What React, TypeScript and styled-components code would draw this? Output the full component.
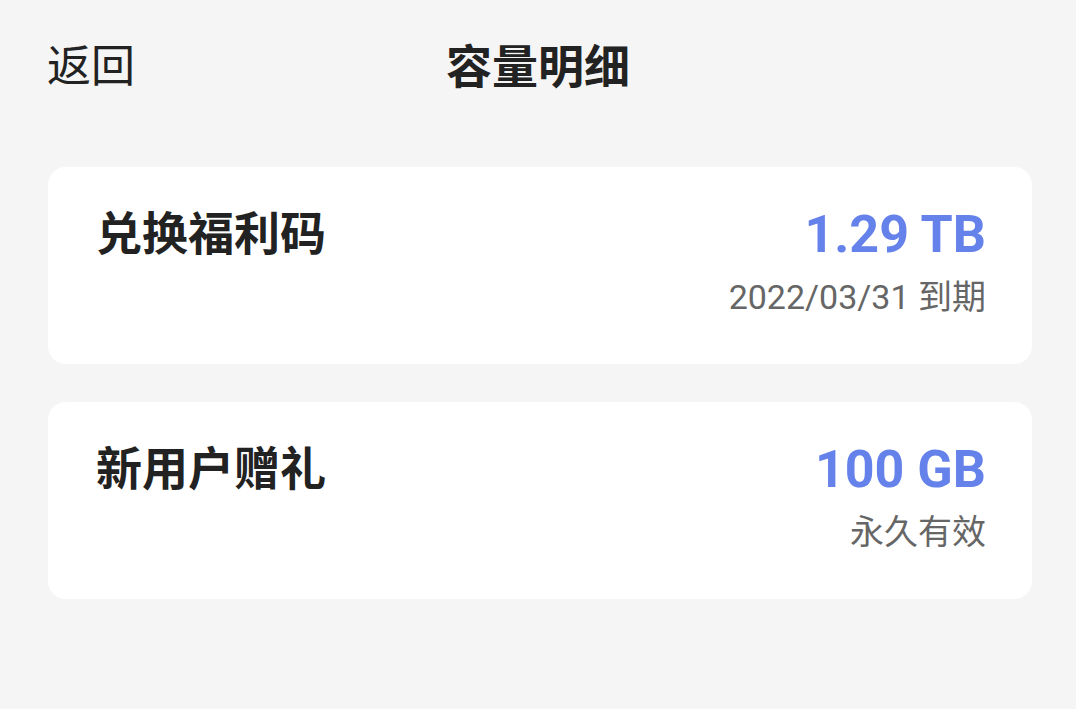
import React from "react";
import styled, { createGlobalStyle } from "styled-components";

const GlobalStyle = createGlobalStyle`
  html, body {
    margin: 0;
    padding: 0;
    background: #f5f5f5;
  }
  body {
    font-family: Roboto, "Noto Sans CJK SC", sans-serif;
    -webkit-font-smoothing: antialiased;
  }
`;

const Page = styled.div`
  width: 1076px;
  min-height: 709px;
  background: #f5f5f5;
  display: flex;
  flex-direction: column;
`;

const Header = styled.header`
  position: relative;
  height: 54px;
  margin-top: 36px;
  padding: 0 47px;
  display: flex;
  align-items: center;
`;

const Back = styled.span`
  font-family: "Noto Sans CJK SC", sans-serif;
  font-size: 44px;
  line-height: 54px;
  color: #222;
`;

const Title = styled.h1`
  position: absolute;
  left: 0;
  right: 0;
  top: 0;
  margin: 0;
  text-align: center;
  font-family: "Noto Sans CJK SC", sans-serif;
  font-size: 46px;
  font-weight: 700;
  line-height: 54px;
  color: #222;
  pointer-events: none;
`;

const List = styled.div`
  display: flex;
  flex-direction: column;
  gap: 38px;
  margin: 77px 44px 0 48px;
`;

const Card = styled.div`
  background: #fff;
  border-radius: 18px;
  height: 197px;
  box-sizing: border-box;
  padding: 42px 46px 0 48px;
  display: flex;
  justify-content: space-between;
  align-items: flex-start;
`;

const ItemName = styled.div`
  font-family: "Noto Sans CJK SC", sans-serif;
  font-size: 46px;
  font-weight: 700;
  line-height: 42px;
  color: #222;
`;

const Right = styled.div`
  display: flex;
  flex-direction: column;
  align-items: flex-end;
  gap: 16px;
`;

const Amount = styled.div`
  font-family: Roboto, sans-serif;
  font-size: 52px;
  font-weight: 700;
  line-height: 52px;
  color: #6581ea;
`;

const Note = styled.div`
  font-family: Roboto, "Noto Sans CJK SC", sans-serif;
  font-size: 34px;
  line-height: 40px;
  color: #666;
`;

const items = [
  { name: "兑换福利码", amount: "1.29 TB", note: "2022/03/31 到期" },
  { name: "新用户赠礼", amount: "100 GB", note: "永久有效" },
];

export default function App() {
  return (
    <Page>
      <GlobalStyle />
      <Header>
        <Back>返回</Back>
        <Title>容量明细</Title>
      </Header>
      <List>
        {items.map((it) => (
          <Card key={it.name}>
            <ItemName>{it.name}</ItemName>
            <Right>
              <Amount>{it.amount}</Amount>
              <Note>{it.note}</Note>
            </Right>
          </Card>
        ))}
      </List>
    </Page>
  );
}
